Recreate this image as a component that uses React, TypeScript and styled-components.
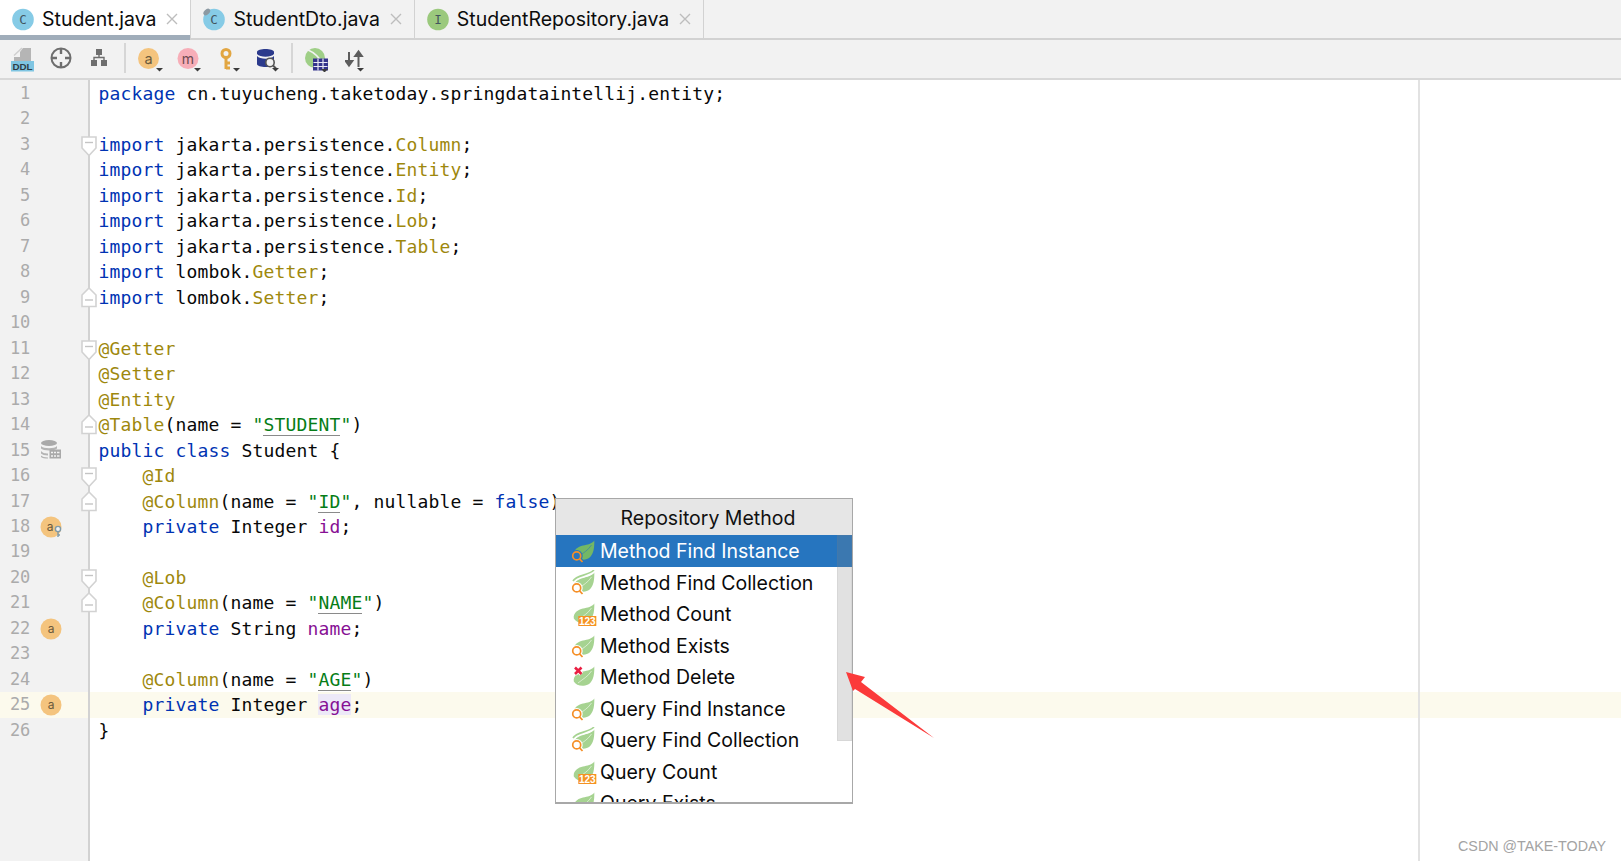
import React from "react";
import styled, { createGlobalStyle } from "styled-components";

const Global = createGlobalStyle`
  html, body { margin: 0; padding: 0; background: #fff; }
  body { font-family: Inter, "Liberation Sans", sans-serif; overflow: hidden; }
`;

const Page = styled.div`
  position: relative;
  width: 1621px;
  height: 861px;
  overflow: hidden;
  display: flex;
  flex-direction: column;
`;

/* ---------- tabs ---------- */
const TabBar = styled.div`
  display: flex;
  height: 40px;
  box-sizing: border-box;
  background: #f2f2f2;
  border-bottom: 2px solid #d2d2d2;
  flex: none;
`;
const Tab = styled.div<{ $active?: boolean }>`
  position: relative;
  display: flex;
  align-items: center;
  height: 38px;
  box-sizing: border-box;
  padding: 0 12px 0 12px;
  gap: 8px;
  border-right: 1px solid #d2d2d2;
  background: ${(p) => (p.$active ? "#fff" : "#f2f2f2")};
  color: #0c0c0c;
  font-size: 19.5px;
  &::after {
    content: "";
    display: ${(p) => (p.$active ? "block" : "none")};
    position: absolute;
    left: 0;
    right: 0;
    bottom: -2px;
    height: 5px;
    background: #a0adba;
  }
`;
const TabLabel = styled.span`
  white-space: nowrap;
  margin-right: 2px;
`;
const TabClose = styled.svg`
  width: 12px;
  height: 12px;
  flex: none;
`;

/* ---------- toolbar ---------- */
const Toolbar = styled.div`
  display: flex;
  align-items: center;
  height: 40px;
  box-sizing: border-box;
  padding: 0 0 2px 11px;
  background: #f2f2f2;
  border-bottom: 2px solid #d8d8d8;
  flex: none;
`;
const ToolIcon = styled.svg<{ $ml: number }>`
  display: block;
  flex: none;
  margin-left: ${(p) => p.$ml}px;
`;
const ToolSep = styled.div<{ $ml: number }>`
  width: 2px;
  height: 30px;
  background: #d6d6d6;
  margin-left: ${(p) => p.$ml}px;
  flex: none;
`;

/* ---------- editor ---------- */
const Editor = styled.div`
  flex: 1;
  display: flex;
  min-height: 0;
`;
const Gutter = styled.div`
  width: 88px;
  flex: none;
  box-sizing: content-box;
  padding-top: 1px;
  background: #f2f2f2;
  border-right: 2px solid #d2d2d2;
  position: relative;
`;
const GutterRow = styled.div<{ $current?: boolean }>`
  position: relative;
  height: 25.48px;
  background: ${(p) => (p.$current ? "#fcfaed" : "transparent")};
  display: flex;
  align-items: center;
`;
const LineNo = styled.span`
  width: 30px;
  text-align: right;
  font: 17px/25.48px "DejaVu Sans Mono", monospace;
  letter-spacing: -0.25px;
  color: #ababab;
  flex: none;
`;
const GutterIconSlot = styled.span`
  margin-left: 10px;
  width: 22px;
  height: 22px;
  display: flex;
  flex: none;
`;
const FoldMark = styled.svg`
  position: absolute;
  left: 81px;
  top: 2px;
  width: 16px;
  height: 22px;
  z-index: 2;
`;
const Code = styled.div`
  position: relative;
  flex: 1;
  padding-top: 1px;
  background: #fff;
`;
const CodeRow = styled.div<{ $current?: boolean }>`
  height: 25.48px;
  padding-left: 8.5px;
  background: ${(p) => (p.$current ? "#fcfaed" : "transparent")};
  font: 18px/25.48px "DejaVu Sans Mono", monospace;
  letter-spacing: 0.16px;
  white-space: pre;
  color: #080808;
`;
const Margin = styled.div`
  position: absolute;
  top: 0;
  bottom: 0;
  left: 1328px;
  width: 2px;
  background: #e2e2e2;
`;

type Kind = "kw" | "ann" | "str" | "field" | "usage";
const colors: Record<Kind, string> = {
  kw: "#0033b3",
  ann: "#9e880d",
  str: "#067d17",
  field: "#871094",
  usage: "#871094",
};
const Tk = styled.span<{ $k: Kind }>`
  color: ${(p) => colors[p.$k]};
  ${(p) => (p.$k === "usage" ? "background: #ede9f8;" : "")}
`;
const StrLink = styled.span`
  color: #067d17;
  border-bottom: 1.5px solid #8a8a8a;
`;

const k = (t: string) => <Tk $k="kw">{t}</Tk>;
const a = (t: string) => <Tk $k="ann">{t}</Tk>;
const f = (t: string) => <Tk $k="field">{t}</Tk>;
const s = (t: string) => (
  <Tk $k="str">
    "<StrLink>{t}</StrLink>"
  </Tk>
);

const imp = (pkg: string, cls: string) => (
  <>
    {k("import")} {pkg}.{a(cls)};
  </>
);

const lines: React.ReactNode[] = [
  <>{k("package")} cn.tuyucheng.taketoday.springdataintellij.entity;</>,
  "",
  imp("jakarta.persistence", "Column"),
  imp("jakarta.persistence", "Entity"),
  imp("jakarta.persistence", "Id"),
  imp("jakarta.persistence", "Lob"),
  imp("jakarta.persistence", "Table"),
  imp("lombok", "Getter"),
  imp("lombok", "Setter"),
  "",
  a("@Getter"),
  a("@Setter"),
  a("@Entity"),
  <>{a("@Table")}(name = {s("STUDENT")})</>,
  <>{k("public")} {k("class")} Student {"{"}</>,
  <>    {a("@Id")}</>,
  <>    {a("@Column")}(name = {s("ID")}, nullable = {k("false")})</>,
  <>    {k("private")} Integer {f("id")};</>,
  "",
  <>    {a("@Lob")}</>,
  <>    {a("@Column")}(name = {s("NAME")})</>,
  <>    {k("private")} String {f("name")};</>,
  "",
  <>    {a("@Column")}(name = {s("AGE")})</>,
  <>    {k("private")} Integer <Tk $k="usage">age</Tk>;</>,
  "}",
];

const foldStart = new Set([3, 11, 16, 20]);
const foldEnd = new Set([9, 14, 17, 21]);

const Fold = ({ end }: { end: boolean }) => (
  <FoldMark viewBox="0 0 16 22">
    {end ? (
      <path d="M1 19.5 H15 V8 L8 1 L1 8 Z" fill="#fff" stroke="#d2d2d2" strokeWidth="1.6" />
    ) : (
      <path d="M1 3 H15 V14 L8 21.5 L1 14 Z" fill="#fff" stroke="#d2d2d2" strokeWidth="1.6" />
    )}
    <path d={end ? "M4 13 H12" : "M4 8.5 H12"} stroke="#c4c4c4" strokeWidth="1.4" />
  </FoldMark>
);

const AttrBadge = ({ keyed }: { keyed?: boolean }) => (
  <svg width="22" height="22" viewBox="0 0 22 22">
    <circle cx="11" cy="11" r="10.5" fill="#f4c47e" />
    <text x={keyed ? 10 : 11} y="15" fontFamily="Inter, sans-serif" fontSize="12" fill="#6b5a3c" textAnchor="middle">a</text>
    {keyed && (
      <g>
        <circle cx="18" cy="13" r="2.6" fill="#f2f2f2" stroke="#7f9aa8" strokeWidth="1.4" />
        <path d="M18 15.5 V21 M18 19 H20" stroke="#7f9aa8" strokeWidth="1.4" fill="none" />
      </g>
    )}
  </svg>
);

const DbGutter = () => (
  <svg width="22" height="22" viewBox="0 0 22 22">
    <ellipse cx="9" cy="4" rx="8" ry="3" fill="#a9a9a9" />
    <path d="M1 7 C3 10 15 10 17 7 V9.5 C15 12 3 12 1 9.5 Z M1 12 C3 14.5 7 14.5 8 14.5 V16.5 C5 16.5 2 15.5 1 14.5 Z M1 16.5 C2 17.5 5 18.5 8 18.5 V19.5 C5 19.5 2 19 1 18 Z" fill="#b4b4b4" />
    <rect x="9.5" y="10.5" width="11.5" height="9" fill="#a9a9a9" />
    <path d="M11 13.5 H13 M14 13.5 H16 M17 13.5 H19.5 M11 17 H13 M14 17 H16 M17 17 H19.5" stroke="#f2f2f2" strokeWidth="1.6" />
  </svg>
);

const FileIcon = ({ letter, color, pin }: { letter: string; color: string; pin?: boolean }) => (
  <svg width="22" height="23" viewBox="0 0 22 23" style={{ flex: "none" }}>
    <circle cx="11" cy="11.5" r="10.8" fill={color} />
    {pin && <ellipse cx="3.8" cy="4" rx="4" ry="2.6" fill="#8c9aa3" transform="rotate(-45 3.8 4)" />}
    <text x="11" y="16" fontFamily="'DejaVu Sans Mono', monospace" fontSize="12.5" fill="#43555e" textAnchor="middle">{letter}</text>
  </svg>
);

const Close = () => (
  <TabClose viewBox="0 0 12 12">
    <path d="M1 1 L11 11 M11 1 L1 11" stroke="#bdbdbd" strokeWidth="1.4" />
  </TabClose>
);

const Caret = ({ x, y }: { x: number; y: number }) => <path d={`M${x} ${y} h7 l-3.5 3.5 Z`} fill="#3c3c3c" />;

/* ---------- popup ---------- */
const Popup = styled.div`
  position: absolute;
  left: 555px;
  top: 498px;
  width: 298px;
  height: 306px;
  box-sizing: border-box;
  border: 1px solid #a8a8a8;
  border-bottom-width: 2px;
  background: #fff;
  overflow: hidden;
  z-index: 3;
`;
const PopupTitle = styled.div`
  height: 36.3px;
  line-height: 38px;
  text-align: center;
  background: #e6e6e6;
  font-size: 19.5px;
  color: #111;
  padding-left: 8px;
  box-sizing: border-box;
`;
const Item = styled.div<{ $sel?: boolean }>`
  height: 31.55px;
  display: flex;
  align-items: center;
  padding-left: 15px;
  gap: 3px;
  font-size: 19.5px;
  white-space: nowrap;
  background: ${(p) => (p.$sel ? "#2675bf" : "transparent")};
  color: ${(p) => (p.$sel ? "#fff" : "#0a0a0a")};
`;
const ScrollTrack = styled.div`
  position: absolute;
  right: 0;
  top: 36px;
  width: 15px;
  height: 206px;
  box-sizing: border-box;
  background: rgba(128, 128, 128, 0.24);
  border: 1px solid rgba(128, 128, 128, 0.1);
`;
const Arrow = styled.svg`
  position: absolute;
  left: 840px;
  top: 665px;
  width: 100px;
  height: 80px;
  z-index: 4;
`;
const Watermark = styled.div`
  position: absolute;
  right: 15px;
  bottom: 5px;
  font: 14.3px/20px "Liberation Sans", Arial, sans-serif;
  color: #a3a3a3;
  z-index: 2;
`;

type Deco = "find" | "coll" | "count" | "del";
const LEAF = "M23.3 2.5 C23.5 11 22.5 21 12.5 21.8 C8 22 4.5 20.5 2.8 17.5 C2 12 7 8.5 12 7.5 C16.5 6.5 21 6 23.3 2.5 Z";
const ItemIcon = ({ deco, sel }: { deco: Deco; sel?: boolean }) => {
  const bg = sel ? "#2675bf" : "#fff";
  const leaf = sel ? "#73b765" : "#a6d391";
  const lens = deco === "find" || deco === "coll";
  return (
    <svg width="26" height="26" viewBox="0 0 26 26" style={{ flex: "none" }}>
      <path d={LEAF} fill={leaf} />
      <path d="M20.5 7 C17 12.5 12 15 7 19" stroke={bg} strokeOpacity="0.55" strokeWidth="1" fill="none" />
      {deco === "coll" && (
        <>
          <path d="M3 12 C7 6 18 7.5 23 1" stroke={bg} strokeWidth="2.4" fill="none" />
          <path d="M2 11 C6 4.5 17 6 23 0" stroke={leaf} strokeWidth="1.6" fill="none" />
        </>
      )}
      {lens && (
        <g fill="none" stroke="#f58f27" strokeWidth="1.7">
          <circle cx="5.7" cy="17.9" r="6" fill={bg} stroke="none" />
          <path d="M8.6 20.9 L11.5 24" stroke={bg} strokeWidth="4" />
          <circle cx="5.7" cy="17.9" r="4" />
          <path d="M8.6 20.9 L11.5 24" />
        </g>
      )}
      {deco === "count" && (
        <g>
          <rect x="7.3" y="15" width="18" height="10" fill="#f59221" />
          <text x="16.3" y="23.6" fontFamily="'Liberation Sans', sans-serif" fontWeight="700" fontSize="10" fill="#fff" textAnchor="middle">123</text>
        </g>
      )}
      {deco === "del" && (
        <g>
          <path d="M4 3.5 L10.5 10 M10.5 3.5 L4 10" stroke="#fff" strokeWidth="4.5" />
          <path d="M4 3.5 L10.5 10 M10.5 3.5 L4 10" stroke="#ea1f43" strokeWidth="2.6" />
        </g>
      )}
    </svg>
  );
};

const items: { label: string; deco: Deco }[] = [
  { label: "Method Find Instance", deco: "find" },
  { label: "Method Find Collection", deco: "coll" },
  { label: "Method Count", deco: "count" },
  { label: "Method Exists", deco: "find" },
  { label: "Method Delete", deco: "del" },
  { label: "Query Find Instance", deco: "find" },
  { label: "Query Find Collection", deco: "coll" },
  { label: "Query Count", deco: "count" },
  { label: "Query Exists", deco: "find" },
];

export default function App() {
  return (
    <Page>
      <Global />
      <TabBar>
        <Tab $active>
          <FileIcon letter="C" color="#86cbe6" />
          <TabLabel>Student.java</TabLabel>
          <Close />
        </Tab>
        <Tab>
          <FileIcon letter="C" color="#86cbe6" pin />
          <TabLabel>StudentDto.java</TabLabel>
          <Close />
        </Tab>
        <Tab>
          <FileIcon letter="I" color="#9bc97d" />
          <TabLabel>StudentRepository.java</TabLabel>
          <Close />
        </Tab>
      </TabBar>
      <Toolbar>
        <ToolIcon $ml={0} width="24" height="28" viewBox="0 0 24 28">
          <path d="M12 4 H20 V17 H3 V13 H9 V8 Z" fill="#b5b5b5" />
          <path d="M3 11.5 L11 4" stroke="#cfcfcf" strokeWidth="1.5" />
          <rect x="0" y="17" width="23" height="10.5" fill="#7fc5e2" />
          <text x="11.5" y="26" fontFamily="'Liberation Sans', sans-serif" fontWeight="700" fontSize="9.8" fill="#2f3d46" textAnchor="middle">DDL</text>
        </ToolIcon>
        <ToolIcon $ml={15} width="22" height="22" viewBox="0 0 22 22">
          <circle cx="11" cy="11" r="9.5" fill="none" stroke="#6e6e6e" strokeWidth="2" />
          <path d="M11 1 V7 M11 15 V21 M1 11 H7 M15 11 H21" stroke="#6e6e6e" strokeWidth="2.4" />
        </ToolIcon>
        <ToolIcon $ml={18} width="18" height="18" viewBox="0 0 18 18">
          <path d="M6 0 H12 V6 H6 Z M1 11 H7 V17 H1 Z M11 11 H17 V17 H11 Z" fill="#6e6e6e" />
          <path d="M9 6 V9 M4 11 V8.5 H14 V11" fill="none" stroke="#6e6e6e" strokeWidth="1.4" />
        </ToolIcon>
        <ToolSep $ml={16} />
        <ToolIcon $ml={12} width="30" height="28" viewBox="0 0 30 28">
          <circle cx="10.5" cy="14.5" r="10.5" fill="#f4c47e" />
          <text x="10.5" y="19.5" fontFamily="Inter, sans-serif" fontSize="14.5" fill="#6b5a3c" textAnchor="middle">a</text>
          <Caret x={18} y={24} />
        </ToolIcon>
        <ToolIcon $ml={9} width="30" height="28" viewBox="0 0 30 28">
          <circle cx="11" cy="14.5" r="10.5" fill="#f7aeb8" />
          <text x="11" y="19.5" fontFamily="Inter, sans-serif" fontSize="14" fill="#6b4a50" textAnchor="middle">m</text>
          <Caret x={17} y={24} />
        </ToolIcon>
        <ToolIcon $ml={13} width="24" height="28" viewBox="0 0 24 28">
          <circle cx="6" cy="9.5" r="4" fill="none" stroke="#e2a642" strokeWidth="3" />
          <path d="M6 13 V25 M6 19 H10 M6 24 H10" stroke="#e2a642" strokeWidth="3" fill="none" />
          <Caret x={13} y={24} />
        </ToolIcon>
        <ToolIcon $ml={13} width="24" height="28" viewBox="0 0 24 28">
          <path d="M0 8 C0 4 17 4 17 8 V20 C17 24 0 24 0 20 Z" fill="#2b3a8c" />
          <path d="M0 10 C3 13.5 14 13.5 17 10 V12 C14 15.5 3 15.5 0 12 Z" fill="#f2f2f2" />
          <circle cx="13" cy="18.5" r="4.2" fill="#f2f2f2" stroke="#555" strokeWidth="1.6" />
          <path d="M16 21.5 L19 24.5" stroke="#555" strokeWidth="2" />
          <Caret x={15} y={24} />
        </ToolIcon>
        <ToolSep $ml={10} />
        <ToolIcon $ml={12} width="26" height="28" viewBox="0 0 26 28">
          <circle cx="10" cy="14" r="10" fill="#9fcf87" />
          <path d="M3 6 C8 8 14 13 18 20" stroke="#f2f2f2" strokeWidth="1.6" fill="none" />
          <rect x="8" y="14.5" width="15" height="12" fill="#34348c" />
          <path d="M8.5 18.5 H22.5 M8.5 22.5 H22.5 M13 14.5 V26.5 M18 14.5 V26.5" stroke="#e8e8f4" strokeWidth="1.2" />
          <Caret x={16} y={25} />
        </ToolIcon>
        <ToolIcon $ml={14} width="21" height="28" viewBox="0 0 21 28">
          <path d="M4 8 V21 M0.7 17 L4 21.5 L7.3 17 Z" stroke="#5d5d5d" strokeWidth="2" fill="#5d5d5d" />
          <path d="M13.5 23 V9 M10.2 12 L13.5 7.5 L16.8 12 Z" stroke="#5d5d5d" strokeWidth="2" fill="#5d5d5d" />
          <Caret x={12} y={24} />
        </ToolIcon>
      </Toolbar>
      <Editor>
        <Gutter>
          {lines.map((_, i) => {
            const n = i + 1;
            return (
              <GutterRow key={n} $current={n === 25}>
                <LineNo>{n}</LineNo>
                {n === 15 && (
                  <GutterIconSlot><DbGutter /></GutterIconSlot>
                )}
                {(n === 18 || n === 22 || n === 25) && (
                  <GutterIconSlot><AttrBadge keyed={n === 18} /></GutterIconSlot>
                )}
                {(foldStart.has(n) || foldEnd.has(n)) && <Fold end={foldEnd.has(n)} />}
              </GutterRow>
            );
          })}
        </Gutter>
        <Code>
          {lines.map((l, i) => (
            <CodeRow key={i} $current={i === 24}>{l}</CodeRow>
          ))}
          <Margin />
        </Code>
      </Editor>
      <Popup>
        <PopupTitle>Repository Method</PopupTitle>
        {items.map((it, i) => (
          <Item key={it.label} $sel={i === 0}>
            <ItemIcon deco={it.deco} sel={i === 0} />
            {it.label}
          </Item>
        ))}
        <ScrollTrack />
      </Popup>
      <Arrow viewBox="0 0 100 80">
        <path d="M6 7 L25 12 L21 17 L94 73 L15 24 L13 26 Z" fill="#fb3a3a" />
      </Arrow>
      <Watermark>CSDN @TAKE-TODAY</Watermark>
    </Page>
  );
}
